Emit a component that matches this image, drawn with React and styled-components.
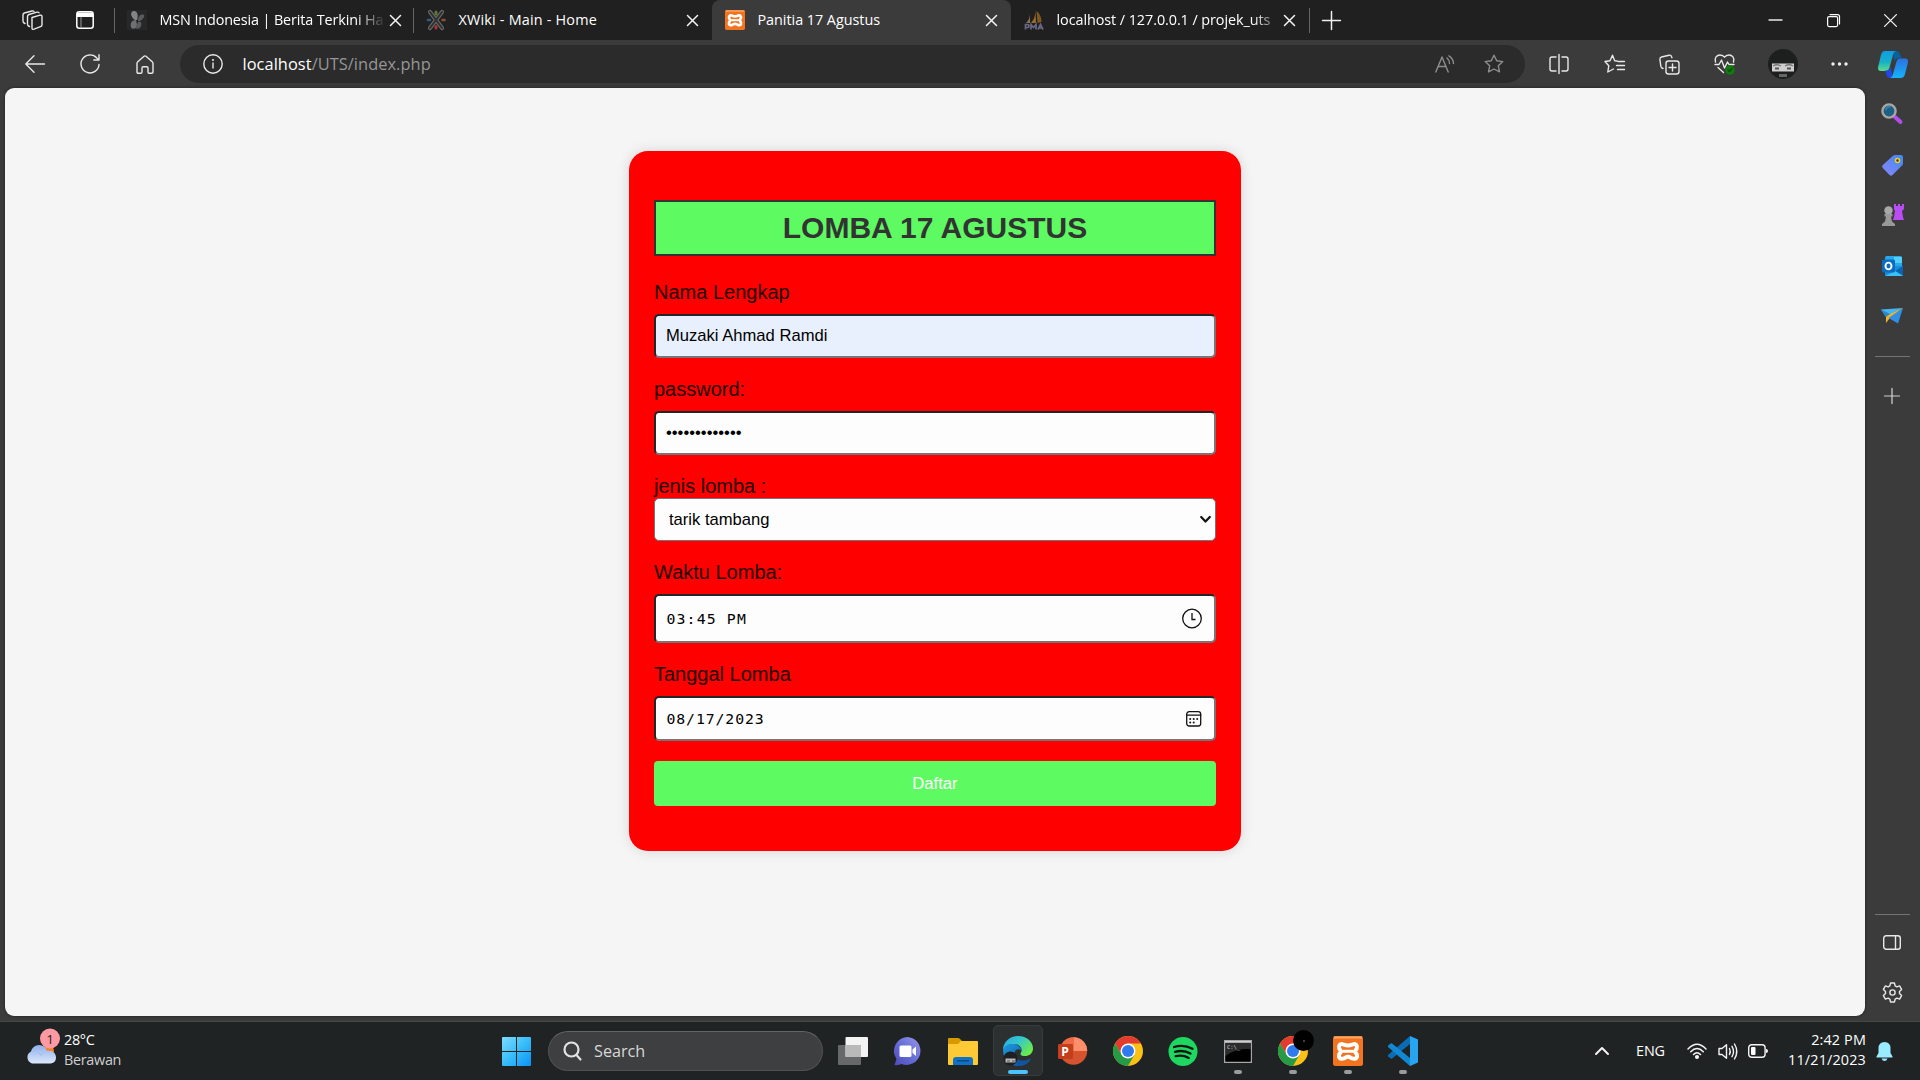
import React from "react";
import styled, { createGlobalStyle, css } from "styled-components";

const ui = `"Open Sans", "Noto Sans", sans-serif`;
const arial = `"Liberation Sans", Arial, sans-serif`;

const Global = createGlobalStyle`
  *, *::before, *::after { box-sizing: border-box; }
  html, body { margin: 0; padding: 0; background: #3b3b3b; overflow: hidden; }
`;

const Screen = styled.div`
  width: 1920px;
  height: 1080px;
  display: flex;
  flex-direction: column;
  background: #3b3b3b;
  font-family: ${ui};
  color: #fff;
  overflow: hidden;
`;

/* ---------- shared ---------- */
const Svg = styled.svg`
  display: block;
  flex: none;
  overflow: visible;
`;
const Line = styled(Svg).attrs((p) => ({
  fill: "none",
  stroke: p.stroke || "#e8e8e8",
  strokeWidth: p.strokeWidth || 1.4,
  strokeLinecap: "round",
  strokeLinejoin: "round",
}))``;
const Slot = styled.div`
  flex: none;
  width: ${(p) => p.$w || 55}px;
  height: 100%;
  display: flex;
  align-items: center;
  justify-content: center;
`;

/* ---------- tab strip ---------- */
const TabStrip = styled.header`
  flex: none;
  height: 40px;
  background: #202020;
  display: flex;
  align-items: center;
  padding-right: 1px;
`;
const TabTools = styled.div`
  width: 114px;
  height: 100%;
  display: flex;
  padding-left: 5px;
`;
const Tab = styled.div`
  width: ${(p) => p.$w || 299}px;
  height: 40px;
  flex: none;
  display: flex;
  align-items: center;
  padding: 0 9px 0 13px;
  position: relative;
  ${(p) =>
    p.$active
      ? css`
          background: #3b3b3b;
          border-radius: 8px 8px 0 0;
        `
      : css`
          &::before {
            content: "";
            display: ${p.$noLine ? "none" : "block"};
            position: absolute;
            left: 0;
            top: 8px;
            width: 1px;
            height: 25px;
            background: #666;
          }
        `}
`;
const TabTitle = styled.span`
  flex: 1;
  margin-left: 12.500px;
  padding-bottom: 1px;
  font-size: 14.4px;
  letter-spacing: ${(p) => p.$ls || 0}px;
  line-height: 20px;
  white-space: nowrap;
  ${(p) => p.$fade && css`
    mask-image: linear-gradient(90deg, #000 196px, transparent 226px);
  `}
`;
const TabClose = styled.div`
  width: 22px;
  display: flex;
  justify-content: center;
  margin-left: 3px;
`;
const StripFill = styled.div`
  flex: 1;
  height: 100%;
`;

const Cross = ({ s = 11, w = 1.5 }) => (
  <Line width={s} height={s} viewBox="0 0 11 11" strokeWidth={w} stroke="#f4f4f4">
    <path d="M.5.5l10 10M10.5.5l-10 10" />
  </Line>
);
const Plus = ({ s = 18, c = "#f0f0f0" }) => (
  <Line width={s} height={s} viewBox="0 0 18 18" strokeWidth={1.4} stroke={c}>
    <path d="M9 .5v17M.5 9h17" />
  </Line>
);
const Xampp = ({ s }) => (
  <Svg width={s} height={s} viewBox="0 0 30 30">
    <rect width="30" height="30" rx="2.500" fill="#f27420" />
    <path d="M1 1.500h28" stroke="#f9a86c" strokeWidth="2" />
    <path
      d="M10 8.300C7 7.300 5.300 10 6.300 12.500C6.800 14 8 14.500 8 15.500S6.300 17.500 6 19C5.500 22 8 23.500 10.500 22.500C12.500 21.700 13 20.800 15 20.800S17.500 21.700 19.500 22.500C22 23.500 24.500 22 24 19C23.700 17.500 22 16.500 22 15.500S23.200 14 23.700 12.500C24.700 10 23 7.300 20 8.300C18 9 17 9.500 15 9.500S12 9 10 8.300z"
      fill="#f27420" stroke="#fff" strokeWidth="4" strokeLinejoin="round"
    />
    <path d="M9.500 15.300h11" stroke="#fff" strokeWidth="3" />
  </Svg>
);
const MsnIcon = () => (
  <Svg width="20" height="20" viewBox="0 0 20 20">
    <rect width="20" height="20" fill="#262829" />
    <path d="M8 10C3 7 3 1 7 1c3.500 0 4.500 5 3 9z" fill="#858585" />
    <path d="M9 10c-5 0-6 4-5 7s6 2 6-2z" fill="#707070" />
    <path d="M11 11c0-4 2-7 5-6.500s0 5-3 6.500zM11 12c3-1 4 1 3 4s-5 4-5 1z" fill="#5c5c5c" />
  </Svg>
);
const XwikiIcon = () => (
  <Svg width="20" height="20" viewBox="0 0 20 20" fill="none" strokeLinecap="round">
    <path d="M4 2l12 16M16 2L4 18" stroke="#686868" strokeWidth="4.200" />
    <path d="M4 2l12 16M16 2L4 18" stroke="#303030" strokeWidth="2" />
    <path d="M10 2v2" stroke="#5c7a35" strokeWidth="3" />
    <path d="M10 16.500v1.500" stroke="#a93535" strokeWidth="3" />
    <path d="M2 10h2" stroke="#315d82" strokeWidth="2.600" />
    <path d="M16.500 10h2" stroke="#8b5030" strokeWidth="2.600" />
  </Svg>
);
const PmaIcon = () => (
  <Svg width="20" height="20" viewBox="0 0 20 20">
    <path d="M6 3c0 4-1 7-4 10h4z" fill="#85744f" />
    <path d="M11.500 0c0 5-1 9-4.500 13h5z" fill="#9a6a26" />
    <path d="M12.500 1c4 3 5 8 5 11l-4 1z" fill="#805820" />
    <path d="M1.500 19.500v-5H3q2 0 2 1.500T3 17.500H2M7 19.500v-5l2.500 3 2.500-3v5M14 19.500l2.500-5 2.500 5M15 18h3" fill="none" stroke="#686884" strokeWidth="1.700" />
  </Svg>
);

/* ---------- toolbar ---------- */
const Toolbar = styled.nav`
  flex: none;
  height: 48px;
  display: flex;
  align-items: center;
  padding-left: 7px;
`;
const Address = styled.div`
  flex: none;
  width: 1345px;
  height: 38px;
  margin: 0 6px 0 8px;
  border-radius: 19px;
  background: #2b2b2b;
  display: flex;
  align-items: center;
  padding: 0 6px 0 12px;
`;
const Url = styled.div`
  flex: 1;
  margin-left: 9.500px;
  padding-bottom: 1px;
  font-size: 16.400px;
  line-height: 24px;
  letter-spacing: 0.050px;
  color: #969696;
  b { font-weight: 400; color: #fff; }
`;
const starPath =
  "M10 1.200l2.700 5.600 6.100.8-4.500 4.200 1.200 6.100L10 15l-5.500 2.900 1.200-6.100L1.200 7.600l6.100-.8z";

/* ---------- body ---------- */
const Body = styled.div`
  flex: none;
  height: 933px;
  display: flex;
`;
const Page = styled.main`
  width: 1860px;
  height: 928px;
  margin-left: 5px;
  padding-top: 63px;
  background: #f5f5f5;
  border-radius: 9px;
  box-shadow: 0 0 3px rgba(0, 0, 0, 0.5);
  display: flex;
  justify-content: center;
  align-items: flex-start;
`;
const Sidebar = styled.aside`
  width: 54px;
  display: flex;
  flex-direction: column;
  align-items: center;
`;
const SideItem = styled.div`
  height: ${(p) => p.$h || 50}px;
  width: 54px;
  display: flex;
  align-items: center;
  justify-content: center;
`;
const SideRule = styled.hr`
  width: 35px;
  height: 1px;
  margin: ${(p) => p.$m || 0};
  border: 0;
  background: #737373;
`;

/* ---------- form ---------- */
const Card = styled.form`
  width: 612px;
  height: 700px;
  padding: 49px 25px 45px;
  background: #f00;
  border-radius: 19px;
  box-shadow: 0 0 13px rgba(0, 0, 0, 0.13);
  font-family: ${arial};
  color: #333;
`;
const Heading = styled.h1`
  height: 56px;
  margin: 0 0 24px;
  border: 2px solid #333;
  background: #5dfb61;
  color: #333;
  font-size: 30px;
  line-height: 52px;
  font-weight: 700;
  text-align: center;
`;
const Field = styled.div`
  display: flex;
  flex-direction: column;
  gap: ${(p) => (p.$tight ? 0 : 10)}px;
  margin-bottom: ${(p) => p.$mb || 19}px;
`;
const Label = styled.label`
  font-size: 20px;
  line-height: 24px;
  color: #1c0000;
`;
const Control = styled.div`
  height: ${(p) => p.$h || 44}px;
  display: flex;
  align-items: center;
  justify-content: space-between;
  padding: 0 10px;
  background: ${(p) => (p.$filled ? "#e8f0fe" : "#fdfdfd")};
  border: 2px solid;
  border-color: #232527 #767676 #767676 #232527;
  border-radius: 5px;
  ${(p) => p.$select && css`
    border: 1px solid #767676;
    padding: 0 4px 0 14px;
  `}
`;
const Value = styled.span`
  font-size: 16.600px;
  line-height: 22px;
  color: #000;
  white-space: pre;
  ${(p) => p.$mono && css`
    padding-top: 1px;
    margin-left: 0.500px;
    font-family: "DejaVu Sans Mono", monospace;
    font-size: 14.800px;
    letter-spacing: ${p.$ls}px;
  `}
`;
const Submit = styled.button`
  display: block;
  width: 100%;
  height: 45px;
  border: 0;
  border-radius: 4px;
  background: #5dfb61;
  color: #fff;
  font: 16.670px ${arial};
`;

/* ---------- taskbar ---------- */
const Taskbar = styled.footer`
  flex: none;
  height: 59px;
  background: #202324;
  border-top: 1px solid #454747;
  display: flex;
  align-items: center;
`;
const Weather = styled.div`
  width: 489px;
  height: 58px;
  padding-left: 24.500px;
  display: flex;
  align-items: center;
`;
const TwoLines = styled.div`
  font-size: 14.400px;
  line-height: 20px;
  letter-spacing: ${(p) => p.$ls || 0}px;
  text-align: ${(p) => p.$align || "left"};
  margin-left: ${(p) => p.$ml || 0}px;
  white-space: nowrap;
  padding-bottom: 3px;
  span { display: block; }
  span + span { color: ${(p) => p.$second || "#fff"}; }
`;
const Search = styled.div`
  flex: none;
  width: 275px;
  height: 40px;
  margin: 0 2px 0 4px;
  border-radius: 20px;
  background: #3d3f40;
  border: 1px solid #505253;
  border-top-color: #626465;
  display: flex;
  align-items: center;
  padding-left: 14px;
  font-size: 16.200px;
  color: #d8d8d8;
  gap: 12px;
`;
const AppButton = styled.div`
  flex: none;
  width: 55px;
  height: 58px;
  display: flex;
  align-items: center;
  justify-content: center;
  position: relative;
  ${(p) => p.$active && css`
    &::before {
      content: "";
      position: absolute;
      inset: 3px 2px 4px 3px;
      border-radius: 5px;
      background: #2d3031;
      border: 1px solid #393b3c;
    }
  `}
  ${(p) => (p.$active || p.$open) && css`
    &::after {
      content: "";
      position: absolute;
      bottom: 6px;
      left: 50%;
      width: ${p.$active ? 20 : 8}px;
      height: 4px;
      margin-left: ${p.$active ? -10 : -4}px;
      border-radius: 2px;
      background: ${p.$active ? "#4cc2ff" : "#9a9b9b"};
    }
  `}
  svg { position: relative; }
`;
const Tray = styled.div`
  margin-left: auto;
  height: 58px;
  display: flex;
  align-items: center;
`;
const Lang = styled.span`
  width: 29px;
  font-size: 14.400px;
  letter-spacing: -0.200px;
  padding-bottom: 2px;
  margin: 0 22px 0 19px;
`;
const Bell = styled(Slot)`
  justify-content: flex-start;
  padding-left: 10px;
`;

const Chrome = ({ badge }) => (
  <Svg width="30" height="30" viewBox="0 0 30 30">
    <circle cx="15" cy="15" r="15" fill="#fbc116" />
    <path d="M15 0A15 15 0 0 1 28 7.500H15L8.500 18.700 2 7.500A15 15 0 0 1 15 0z" fill="#e33b2e" />
    <path d="M2 7.500A15 15 0 0 0 15 30l6.500-11.200H8.500z" fill="#259b48" />
    <circle cx="15" cy="15" r="7.500" fill="#fff" />
    <circle cx="15" cy="15" r="6" fill="#2f7bee" />
    {badge && (
      <>
        <circle cx="25.500" cy="4.500" r="10.500" fill="#000" />
        <circle cx="26" cy="5" r="1" fill="#555" />
      </>
    )}
  </Svg>
);

const Edge = () => (
  <Svg width="30" height="30" viewBox="0 0 30 30">
    <defs>
      <linearGradient id="edgeTop" x1="0" y1="0" x2="1" y2=".6">
        <stop offset="0" stopColor="#2aa7e8" />
        <stop offset=".5" stopColor="#33c7d0" />
        <stop offset="1" stopColor="#6bea4b" />
      </linearGradient>
      <linearGradient id="edgeLow" x1="0" y1="0" x2="1" y2="1">
        <stop offset="0" stopColor="#1b9de2" />
        <stop offset="1" stopColor="#0c4a94" />
      </linearGradient>
    </defs>
    <path d="M0 14C0 6 7 0 15 0c9 0 15 6 15 12.500 0 5-4 7.500-8 7.500-4 0-5.500-1.500-4-3.500 2-4-1-8.500-7-8.500-5 0-9 2-11 6z" fill="url(#edgeTop)" />
    <path d="M0 14c1-4 5-6 10-6 5 0 8 3 8 6-3-2-7 0-7 5s6 9 11 8c2-.3 4-1.500 5-3-2 4-7 6-12 6C7 30 0 23 0 14z" fill="url(#edgeLow)" />
    <path d="M11 17c0 6 6 8 10 7.500 3 0 6-2 7-2-1.500 3.500-6 7.500-12 7.500-4-3-6-8-5-13z" fill="#12549f" />
    <circle cx="7.500" cy="22.500" r="7" fill="#1d1f20" />
    <path d="M2.500 22.500h10v4h-10z" fill="#b9b9b9" />
    <path d="M4 25h3M9 25h3" stroke="#555" />
  </Svg>
);

export default function App() {
  return (
    <Screen>
      <Global />
      <TabStrip>
        <TabTools>
          <Slot>
            <Line width="21" height="21" viewBox="0 0 21 21" strokeWidth="1.400">
              <path d="M10 7.500l8-2.300q2-.5 2 1.500v8q0 1.500-1.500 2l-6.500 2.500q-2 .7-2-1.200z" />
              <path d="M7.500 16.500L6.500 16q-1-.5-1-2V6.500q0-1.500 1.500-2l8-2.300q1.500-.4 2 .6" />
              <path d="M3 13.500L2 13q-1-.5-1-2V4.800q0-1.300 1.300-1.800l7.700-2q1.500-.4 2 .5" />
            </Line>
          </Slot>
          <Slot $w={50}>
            <Svg width="18" height="18" viewBox="0 0 18 18">
              <rect x=".8" y=".8" width="16.400" height="16.400" rx="2.500" fill="none" stroke="#fff" strokeWidth="1.500" />
              <path d="M1 1.500h16v4.500H1z" fill="#fff" />
              <path d="M5 6v11" stroke="#999" strokeWidth="1" />
            </Svg>
          </Slot>
        </TabTools>
        <Tab>
          <MsnIcon />
          <TabTitle $fade $ls={-0.13}>MSN Indonesia | Berita Terkini Ha</TabTitle>
          <TabClose><Cross /></TabClose>
        </Tab>
        <Tab>
          <XwikiIcon />
          <TabTitle $ls={0.2}>XWiki - Main - Home</TabTitle>
          <TabClose><Cross /></TabClose>
        </Tab>
        <Tab $active>
          <Xampp s={20} />
          <TabTitle $ls={-0.04}>Panitia 17 Agustus</TabTitle>
          <TabClose><Cross /></TabClose>
        </Tab>
        <Tab $noLine $w={298}>
          <PmaIcon />
          <TabTitle $fade $ls={-0.07}>localhost / 127.0.0.1 / projek_uts</TabTitle>
          <TabClose><Cross /></TabClose>
        </Tab>
        <Tab $w={46}><Plus s={19} /></Tab>
        <StripFill />
        <Slot $w={57}>
          <Line width="13" height="2" viewBox="0 0 13 2"><path d="M0 1h13" /></Line>
        </Slot>
        <Slot $w={58}>
          <Line width="13" height="13" viewBox="0 0 13 13" strokeWidth="1.200" stroke="#fff">
            <rect x=".6" y="2.600" width="10" height="10" rx="1.500" />
            <path d="M3 .6h7.500q2 0 2 2V10" />
          </Line>
        </Slot>
        <Slot $w={57}><Cross s={13} w={1.1} /></Slot>
      </TabStrip>

      <Toolbar>
        <Slot>
          <Line width="20" height="18" viewBox="0 0 20 18"><path d="M19.500 9H.8M9 .8L.8 9 9 17.200" /></Line>
        </Slot>
        <Slot>
          <Line width="20" height="20" viewBox="0 0 20 20"><path d="M19 10.500A9 9 0 1 1 16.800 4L19 6M19 .8V6h-5.200" /></Line>
        </Slot>
        <Slot>
          <Line width="18" height="19" viewBox="0 0 18 19">
            <path d="M1 8.500q0-1 .8-1.700L8 1.300q1-.8 2 0l6.200 5.500q.8.700.8 1.700V17q0 1.200-1.200 1.200h-2.600Q12 18.200 12 17v-4q0-1.200-1.200-1.200H7.200Q6 11.800 6 13v4q0 1.200-1.200 1.200H2.200Q1 18.200 1 17z" />
          </Line>
        </Slot>
        <Address>
          <Slot $w={41}>
            <Line width="20" height="20" viewBox="0 0 20 20">
              <circle cx="10" cy="10" r="9.200" />
              <path d="M10 9v5" />
              <circle cx="10" cy="6" r=".4" />
            </Line>
          </Slot>
          <Url><b>localhost</b>/UTS/index.php</Url>
          <Slot $w={49}>
            <Line width="20" height="18" viewBox="0 0 20 18" stroke="#8e8e8e">
              <path d="M.8 17L7 2l6.200 15M3 11.500h8M12 3q2.500 2 2.500 5.500M14 .8q4.500 3 4.500 7.700" />
            </Line>
          </Slot>
          <Slot $w={50}>
            <Line width="20" height="20" viewBox="0 0 20 20" stroke="#8e8e8e"><path d={starPath} /></Line>
          </Slot>
        </Address>
        <Slot>
          <Line width="20" height="20" viewBox="0 0 20 20">
            <path d="M10 .5v19M7 3H3Q1 3 1 5v10q0 2 2 2h4M13 3h4q2 0 2 2v10q0 2-2 2h-4" />
          </Line>
        </Slot>
        <Slot $w={56}>
          <Line width="21" height="20" viewBox="0 0 21 20">
            <path d="M13 7L10.700 6.700 8.500 1.200 6 6.700l-5 .8 3.800 4.200L3.800 18l5.700-3M14 7.500h6.500M12.500 11.500h8M13.500 15.500h7" />
          </Line>
        </Slot>
        <Slot $w={54}>
          <Line width="21" height="21" viewBox="0 0 21 21">
            <rect x="7" y="7" width="13" height="13" rx="2.500" />
            <path d="M13.500 10v7M10 13.500h7M4 14.500l-1-.5q-1-.5-1.200-2L.9 5.500q-.2-2 1.600-2.500L10 1.200q2-.4 2.600 1.500l.4 1" />
          </Line>
        </Slot>
        <Slot $w={57}>
          <Line width="21" height="20" viewBox="0 0 21 20">
            <path d="M1.500 8C0 3.500 3 1 6 1q3 0 4.500 2.200Q12 1 15 1c3 0 6 2.500 4.500 7M1 10.500h4L7.500 6l3 8 3-6 1.500 2.500h5M4 13.500l5.500 5" />
            <circle cx="16" cy="16" r="4.700" fill="#107c10" stroke="none" />
            <path d="M14 16l1.500 1.500 2.500-3" stroke="#0a500a" />
          </Line>
        </Slot>
        <Slot $w={59}>
          <Svg width="30" height="30" viewBox="0 0 30 30">
            <circle cx="15" cy="15" r="15" fill="#1d1e1e" />
            <path d="M4 14.500h22v8H4z" fill="#cfcfcf" />
            <path d="M5 17q4-2.500 8 0M17 17q4-2.500 8 0" stroke="#777" strokeWidth="1.300" fill="none" />
            <path d="M7 19.500h4M19 19.500h4" stroke="#555" strokeWidth="2" />
            <path d="M11 26.500h8" stroke="#666" strokeWidth="3" />
          </Svg>
        </Slot>
        <Slot>
          <Svg width="17" height="4" viewBox="0 0 17 4" fill="#f0f0f0">
            <circle cx="2" cy="2" r="1.700" /><circle cx="8.500" cy="2" r="1.700" /><circle cx="15" cy="2" r="1.700" />
          </Svg>
        </Slot>
        <Slot $w={52}>
          <Svg width="30" height="27" viewBox="0 0 30 27">
            <defs>
              <linearGradient id="cpA" x1="0" y1="0" x2="0" y2="1">
                <stop offset="0" stopColor="#109de4" /><stop offset=".55" stopColor="#16b0c8" /><stop offset="1" stopColor="#5fdc8c" />
              </linearGradient>
              <linearGradient id="cpB" x1="0" y1="0" x2="0" y2="1">
                <stop offset="0" stopColor="#2e70e0" /><stop offset="1" stopColor="#14b4fa" />
              </linearGradient>
            </defs>
            <path d="M15 0h3q3 0 4 3l1.500 4.500H20q-3 0-4 3z" fill="#0a5f9c" />
            <path d="M7 0h11.500Q16 0 15 4l-3.500 12.500Q10.500 20 7.500 20H3q-4 0-2.700-5L3 4Q4 0 7 0z" fill="url(#cpA)" />
            <path d="M15 27h-3q-2.500 0-3.500-3L7 19.500h2q2.500 0 3.500-4z" fill="#2148e0" />
            <path d="M22.500 27H11.500Q14 27 15 23l3.500-12.500Q19.500 7.500 22.500 7.500H27q4 0 2.700 5L27 23q-1 4-4.500 4z" fill="url(#cpB)" />
          </Svg>
        </Slot>
      </Toolbar>

      <Body>
        <Page>
          <Card>
            <Heading>LOMBA 17 AGUSTUS</Heading>
            <Field>
              <Label>Nama Lengkap</Label>
              <Control $filled><Value>Muzaki Ahmad Ramdi</Value></Control>
            </Field>
            <Field>
              <Label>password:</Label>
              <Control><Value>•••••••••••••</Value></Control>
            </Field>
            <Field $tight>
              <Label>jenis lomba :</Label>
              <Control $select $h={43}>
                <Value>tarik tambang</Value>
                <Line width="11" height="7" viewBox="0 0 11 7" stroke="#111" strokeWidth="2.200">
                  <path d="M1.200 1l4.300 4.500L9.800 1" />
                </Line>
              </Control>
            </Field>
            <Field>
              <Label>Waktu Lomba:</Label>
              <Control $h={49}>
                <Value $mono $ls={1.15}>03:45 PM</Value>
                <Line width="22" height="20" viewBox="0 0 22 20" stroke="#111" strokeWidth="1.300">
                  <circle cx="10" cy="9.500" r="9.300" />
                  <path d="M10 4v6.500h3.500" strokeLinecap="butt" strokeLinejoin="miter" />
                </Line>
              </Control>
            </Field>
            <Field $mb={20}>
              <Label>Tanggal Lomba</Label>
              <Control $h={45}>
                <Value $mono $ls={0.9}>08/17/2023</Value>
                <Line width="18" height="16" viewBox="0 0 18 16" stroke="#111" strokeWidth="1.300">
                  <rect x=".7" y=".7" width="14" height="14.300" rx="2.500" />
                  <path d="M.7 4.200h14" />
                  <path d="M4.200 8h.01M7.700 8h.01M11.200 8h.01M4.200 11.500h.01M7.700 11.500h.01" strokeWidth="2" />
                </Line>
              </Control>
            </Field>
            <Submit type="button">Daftar</Submit>
          </Card>
        </Page>
        <Sidebar>
          <SideItem $h={52}>
            <Svg width="22" height="22" viewBox="0 0 22 22">
              <path d="M14 14l5.500 5" stroke="#b44cf0" strokeWidth="4" strokeLinecap="round" />
              <circle cx="8" cy="8" r="6.600" fill="#1d5f85" stroke="#a9a6a2" strokeWidth="2.400" />
              <path d="M4.500 7a4 4 0 0 1 5-3" stroke="#3a89ad" strokeWidth="1.500" fill="none" />
            </Svg>
          </SideItem>
          <SideItem>
            <Svg width="21" height="21" viewBox="0 0 21 21">
              <defs>
                <linearGradient id="tag" x1="1" y1="0" x2="0" y2="1">
                  <stop offset="0" stopColor="#3f8af0" /><stop offset="1" stopColor="#8a86f8" />
                </linearGradient>
              </defs>
              <path d="M11 .8Q12 0 13.500 0H19q2 0 2 2v6q0 1.500-1 2.500l-9.500 9.500q-1.500 1.500-3 0L.8 13q-1.500-1.500 0-3z" fill="url(#tag)" />
              <circle cx="15.500" cy="5.500" r="2" fill="#333" stroke="#f6cd25" strokeWidth="1.500" />
            </Svg>
          </SideItem>
          <SideItem>
            <Svg width="23" height="24" viewBox="0 0 23 24">
              <path d="M13 1h2v2h2V1h2v2h2V1h2v5l-2 2 1 6 1 3H12l1-3 1-6-1-2z" fill="#b94cf2" />
              <circle cx="7.500" cy="7.500" r="4.200" fill="#a8a8a8" />
              <path d="M3.500 11h8v2.500H10l1 5 3 2.500v2H1v-2l3-2.500 1-5H3.500z" fill="#999" />
            </Svg>
          </SideItem>
          <SideItem $h={52}>
            <Svg width="21" height="21" viewBox="0 0 21 21">
              <rect x="3" width="17" height="12" rx="1.500" fill="#28a8ea" />
              <path d="M12 1h8v6h-8z" fill="#50d0f8" />
              <path d="M3 10h18v9q0 1-1 1H4q-1 0-1-1z" fill="#1490df" />
              <path d="M21 10v9.500L13 15z" fill="#0a64ad" />
              <path d="M3 20l10-5 8 5z" fill="#39c2f4" />
              <rect y="3.500" width="13" height="13" rx="1.500" fill="#0b6cbd" />
              <ellipse cx="6.500" cy="10" rx="3" ry="3.400" fill="none" stroke="#fff" strokeWidth="1.900" />
            </Svg>
          </SideItem>
          <SideItem $h={48}>
            <Svg width="22" height="16" viewBox="0 0 22 16">
              <path d="M0 1.500L22 0 5 9z" fill="#45b5f3" />
              <path d="M22 0L5 8v7l3-4z" fill="#f6b321" />
              <path d="M22 0L7.500 10 17 15.500z" fill="#318fe6" />
              <path d="M0 1.500L5 9l4-3z" fill="#2d86c8" />
            </Svg>
          </SideItem>
          <SideRule $m="16px 0 14px" />
          <SideItem><Plus s={16} c="#d0d0d0" /></SideItem>
          <SideRule $m="493px 0 2px" />
          <SideItem>
            <Line width="18" height="15" viewBox="0 0 18 15">
              <rect x=".7" y=".7" width="16.600" height="13.600" rx="2.500" />
              <path d="M12.500 1v13" />
            </Line>
          </SideItem>
          <SideItem>
            <Line width="21" height="21" viewBox="0 0 24 24" strokeWidth="1.600">
              <path d="M9.700 1.200h4.600l.7 3.200 2 1.100 3.100-1 2.300 4-2.400 2.300v2.400l2.400 2.300-2.300 4-3.100-1-2 1.100-.7 3.200H9.700L9 19.600l-2-1.100-3.100 1-2.300-4L4 13.200v-2.400L1.600 8.500l2.300-4 3.100 1 2-1.100z" />
              <circle cx="12" cy="12" r="3" />
            </Line>
          </SideItem>
        </Sidebar>
      </Body>

      <Taskbar>
        <Weather>
          <Svg width="35" height="32" viewBox="0 0 35 32">
            <defs>
              <linearGradient id="cloud" x1="0" y1="0" x2="0" y2="1">
                <stop offset="0" stopColor="#8fb0ee" /><stop offset="1" stopColor="#dce8fa" />
              </linearGradient>
            </defs>
            <circle cx="23" cy="16" r="6" fill="#f58220" />
            <path d="M7 28.500a6.500 6.500 0 0 1-1-12Q8 10 14 10q6 0 8 6c5-1 9 2 9 6.500s-3 6-7 6z" fill="url(#cloud)" />
            <path d="M8 17q5-2 8 3 4-5 9-3" fill="none" stroke="#a9c2f2" strokeWidth="1.500" />
            <circle cx="25" cy="3.500" r="10" fill="#ff99a4" />
            <text x="25" y="8.500" fontSize="13.500" fontFamily="Open Sans, sans-serif" textAnchor="middle" fill="#222">1</text>
          </Svg>
          <TwoLines $ml={4.5} $second="#cfcfcf" $ls={-0.3}>
            <span>28°C</span>
            <span>Berawan</span>
          </TwoLines>
        </Weather>
        <AppButton>
          <Svg width="29" height="29" viewBox="0 0 29 29">
            <defs>
              <linearGradient id="win" x1="0" y1="0" x2="1" y2="1">
                <stop offset="0" stopColor="#7fdcfc" /><stop offset=".5" stopColor="#38bdf8" /><stop offset="1" stopColor="#0a93f5" />
              </linearGradient>
            </defs>
            <path d="M1 0h13v14H0V1q0-1 1-1zM15 0h13q1 0 1 1v13H15zM0 15h14v14H1q-1 0-1-1zM15 15h14v13q0 1-1 1H15z" fill="url(#win)" />
          </Svg>
        </AppButton>
        <Search>
          <Line width="19" height="20" viewBox="0 0 19 20" strokeWidth="2.200" stroke="#e2e2e2">
            <circle cx="8.500" cy="8.500" r="7" /><path d="M13.500 14l4 4.500" />
          </Line>
          <span>Search</span>
        </Search>
        <AppButton>
          <Svg width="30" height="28" viewBox="0 0 30 28">
            <rect y="8" width="23" height="20" rx="1" fill="#666869" />
            <rect x="7.500" width="22.500" height="20" rx="1" fill="#f3f3f3" />
            <path d="M7.500 8H23v12H7.500z" fill="#b9b9ba" />
          </Svg>
        </AppButton>
        <AppButton>
          <Svg width="29" height="29" viewBox="0 0 29 29">
            <defs>
              <linearGradient id="chat" x1="1" y1="0" x2="0" y2="1">
                <stop offset="0" stopColor="#9a94e8" /><stop offset=".5" stopColor="#6670d8" /><stop offset="1" stopColor="#5048b8" />
              </linearGradient>
            </defs>
            <path d="M15 0A14 14 0 1 1 8.500 27q-3 1.500-7 1l2-6A14 14 0 0 1 15 0z" fill="url(#chat)" />
            <rect x="6.500" y="8.500" width="12" height="11.500" rx="1.500" fill="#fff" />
            <path d="M19.500 12.500l3.500-3v9.500l-3.500-3z" fill="#fff" />
          </Svg>
        </AppButton>
        <AppButton>
          <Svg width="30" height="27" viewBox="0 0 30 27">
            <path d="M1 0h9q1 0 2 1l2 2v4H0V1q0-1 1-1z" fill="#d99a00" />
            <path d="M0 6h10l3-3h16q1 0 1 1v22q0 1-1 1H1q-1 0-1-1z" fill="#fdc935" />
            <path d="M5 27v-5q0-3 3-3h14q3 0 3 3v5z" fill="#0f72c4" />
            <path d="M9 22.800h12" stroke="#0a4a86" strokeWidth="1.500" />
          </Svg>
        </AppButton>
        <AppButton $active><Edge /></AppButton>
        <AppButton>
          <Svg width="30" height="28" viewBox="0 0 30 28">
            <circle cx="15.500" cy="14" r="13.700" fill="#d6532f" />
            <path d="M15.500 14V.3A13.700 13.700 0 0 1 29.200 14z" fill="#ff8f6b" />
            <path d="M15.500 14V.3A13.700 13.700 0 0 0 1.800 14z" fill="#ed6c47" />
            <rect x="0" y="7" width="15" height="15" rx="1.200" fill="#c43e1c" />
            <text x="7" y="18.500" fontSize="12" fontWeight="700" fontFamily="Open Sans, sans-serif" textAnchor="middle" fill="#fff">P</text>
          </Svg>
        </AppButton>
        <AppButton><Chrome /></AppButton>
        <AppButton>
          <Svg width="29" height="29" viewBox="0 0 29 29">
            <circle cx="15" cy="14.500" r="14.500" fill="#1ed760" />
            <path d="M6 10q10-2.800 18.500 1.800M7 14.800q8.500-2.200 15.500 1.700M7.700 19.200q7-1.700 13 1.700" fill="none" stroke="#101312" strokeWidth="2.300" strokeLinecap="round" />
          </Svg>
        </AppButton>
        <AppButton $open>
          <Svg width="28" height="23" viewBox="0 0 28 23">
            <rect x=".7" y=".7" width="26.600" height="21.600" fill="#171717" stroke="#a6a6a6" strokeWidth="1.400" />
            <path d="M1 1h26v1.800H1z" fill="#d0d0d0" />
            <path d="M1.400 3h25.200v6Q12 8 1.400 16z" fill="#2c2c2c" />
            <path d="M1.400 16Q12 8 26.600 9v12.600H1.400z" fill="#000" />
            <text x="3" y="8.800" fontSize="5.500" fontFamily="DejaVu Sans Mono, monospace" fill="#ddd">C:\_</text>
          </Svg>
        </AppButton>
        <AppButton $open><Chrome badge /></AppButton>
        <AppButton $open><Xampp s={30} /></AppButton>
        <AppButton $open>
          <Svg width="30" height="30" viewBox="0 0 30 30">
            <path d="M22 8L3.500 23 0 20.500V19L22 0z" fill="#0a6cb4" />
            <path d="M22 22L3.500 7 0 9.500V11l22 19z" fill="#1287d2" />
            <path d="M22 0l8 3.500v23L22 30z" fill="#27a5f0" />
          </Svg>
        </AppButton>
        <Tray>
          <Slot $w={30}>
            <Line width="14" height="8" viewBox="0 0 14 8" strokeWidth="2" stroke="#f4f4f4"><path d="M1 7l6-6 6 6" /></Line>
          </Slot>
          <Lang>ENG</Lang>
          <Line width="20" height="16" viewBox="0 0 20 16" strokeWidth="1.500" stroke="#f4f4f4">
            <path d="M1 6q9-9.500 18 0M3.700 8.800q6.300-6.500 12.600 0M6.500 11.500q3.500-3.500 7 0" />
            <circle cx="10" cy="14" r="1.300" fill="#fff" />
          </Line>
          <Slot $w={41}>
            <Line width="20" height="17" viewBox="0 0 20 17" strokeWidth="1.400" stroke="#f4f4f4">
              <path d="M1 5.500h3L8.500 1.700v13.600L4 11.500H1zM11.500 5.500q1.500 3 0 6M14 3.300q3 5.200 0 10.400M16.500 1q4.500 7.500 0 15" />
            </Line>
          </Slot>
          <Svg width="20" height="14" viewBox="0 0 20 14">
            <rect x=".7" y=".7" width="16.400" height="12.600" rx="3" fill="none" stroke="#f4f4f4" strokeWidth="1.400" />
            <rect x="3" y="3" width="4.500" height="8" rx="1" fill="#fff" />
            <path d="M18 5q2 0 2 2t-2 2z" fill="#f4f4f4" />
          </Svg>
          <TwoLines $align="right" $ml={20} $ls={0.15}>
            <span>2:42 PM</span>
            <span>11/21/2023</span>
          </TwoLines>
          <Bell $w={54}>
            <Svg width="17" height="19" viewBox="0 0 17 19" fill="#99ebff">
              <path d="M8.500 0Q14.500 0 14.500 6.500V11l2 3.500q.5 1-.5 1H1q-1 0-.5-1L2.500 11V6.500Q2.500 0 8.500 0zM5.500 16.500h6q-1 2.500-3 2.500t-3-2.500z" />
            </Svg>
          </Bell>
        </Tray>
      </Taskbar>
    </Screen>
  );
}
